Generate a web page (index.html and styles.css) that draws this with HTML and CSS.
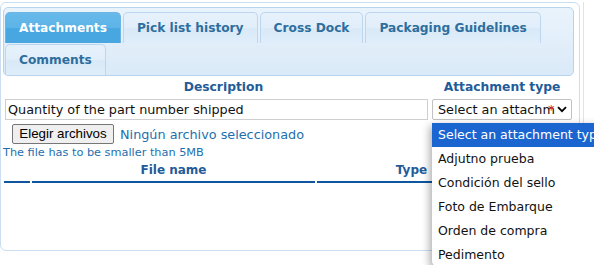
FILE: index.html
```html
<!DOCTYPE html>
<html>
<head>
<meta charset="utf-8">
<link rel="stylesheet" href="styles.css">
</head>
<body>
<div class="page">
  <div class="tabs">
    <ul class="nav">
      <li class="tab active">Attachments</li>
      <li class="tab">Pick list history</li>
      <li class="tab">Cross Dock</li>
      <li class="tab">Packaging Guidelines</li>
      <li class="tab">Comments</li>
    </ul>
    <div class="panel">
      <div class="form-row heads">
        <div class="col-desc">Description</div>
        <div class="col-type">Attachment type</div>
      </div>
      <div class="form-row fields">
        <div class="col-desc"><div class="text-input">Quantity of the part number shipped</div></div>
        <div class="col-type">
          <div class="select">
            <span class="select-text">Select an attachm</span>
            <span class="req">*</span>
            <svg class="chev" width="10" height="7" viewBox="0 0 10 7"><path d="M1 1.2 L5 5.2 L9 1.2" fill="none" stroke="#000" stroke-width="1.8"/></svg>
          </div>
        </div>
      </div>
      <div class="file-row">
        <span class="file-btn">Elegir archivos</span>
        <span class="file-none">Ningún archivo seleccionado</span>
      </div>
      <div class="hint">The file has to be smaller than 5MB</div>
      <div class="grid-head">
        <div class="gh"></div>
        <div class="gh">File name</div>
        <div class="gh">Type</div>
        <div class="gh"></div>
      </div>
    </div>
  </div>
  <ul class="dropdown">
    <li class="opt selected">Select an attachment type</li>
    <li class="opt">Adjutno prueba</li>
    <li class="opt">Condición del sello</li>
    <li class="opt">Foto de Embarque</li>
    <li class="opt">Orden de compra</li>
    <li class="opt">Pedimento</li>
  </ul>
</div>
</body>
</html>
```

FILE: styles.css
```css
html, body {
  margin: 0;
  padding: 0;
  background: #fff;
}
body {
  font-family: "DejaVu Sans", Verdana, sans-serif;
  font-size: 12px;
  overflow: hidden;
}
.page {
  position: relative;
  width: 583px;
  height: 265px;
  border-right: 1px solid #d6e6f6;
}
.tabs {
  margin-top: 2px;
  width: 580px;
  height: 249px;
  box-sizing: border-box;
  border: 1px solid #c9def3;
  border-radius: 6px;
  padding: 4px 5px 0 2px;
}
.nav {
  list-style: none;
  margin: 0;
  padding: 4px 0 0 1px;
  display: flex;
  flex-wrap: wrap;
  align-content: flex-start;
  column-gap: 2px;
  row-gap: 1px;
  border: 1px solid #b7d3ee;
  border-radius: 5px;
  background: linear-gradient(#e9f3fc, #dbeaf8);
  height: 63px;
  box-sizing: content-box;
}
.tab {
  height: 31px;
  box-sizing: border-box;
  border: 1px solid #bcd6ef;
  border-bottom: 0;
  border-radius: 5px 5px 0 0;
  padding: 0 13px;
  line-height: 30px;
  font-weight: bold;
  font-size: 12.2px;
  color: #2e6e9e;
  background: linear-gradient(#e6f1fb 0%, #e1eefa 50%, #d9e9f7 52%, #dfeefa 100%);
}
.tab.active {
  color: #fff;
  border-color: #6cb4e4;
  background: linear-gradient(#67baea 0%, #5db3e7 50%, #46a7e2 52%, #4aa6df 100%);
}
.panel {
  padding: 0;
}
.form-row {
  display: flex;
}
.heads {
  height: 23px;
  line-height: 22px;
  font-weight: bold;
  font-size: 12.3px;
  color: #1f5c99;
}
.heads .col-desc {
  width: 441px;
  text-align: center;
}
.heads .col-type {
  width: 140px;
  text-align: center;
  margin-left: -12px;
}
.fields .col-desc {
  width: 427px;
  padding-left: 2px;
}
.text-input {
  width: 423px;
  height: 21px;
  box-sizing: border-box;
  border: 1px solid #cfcfcf;
  padding: 0 2px;
  line-height: 19px;
  font-size: 12.8px;
  color: #111;
  white-space: nowrap;
  overflow: hidden;
}
.select {
  position: relative;
  width: 140px;
  height: 21px;
  box-sizing: border-box;
  border: 1px solid #c2c2c2;
  border-radius: 2px;
  padding: 0 4px 0 5px;
  line-height: 19px;
  font-size: 12.8px;
  color: #111;
  white-space: nowrap;
  overflow: hidden;
  display: flex;
  align-items: center;
}
.select-text {
  flex: 1;
  overflow: hidden;
}
.req {
  position: absolute;
  left: 115px;
  top: 0;
  color: #e02020;
  font-size: 13px;
}
.chev {
  flex: none;
}
.file-row {
  margin-top: 4px;
  padding-left: 9px;
  height: 20px;
  display: flex;
  align-items: center;
  gap: 6px;
}
.file-btn {
  display: inline-block;
  box-sizing: border-box;
  width: 102px;
  height: 20px;
  border: 1px solid #767676;
  border-radius: 2px;
  background: #efefef;
  font-family: "Liberation Sans", Arial, sans-serif;
  font-size: 13.33px;
  line-height: 18px;
  text-align: center;
  color: #000;
}
.file-none {
  font-size: 12.8px;
  color: #1d6fae;
}
.hint {
  height: 18px;
  line-height: 18px;
  font-size: 11.3px;
  color: #1d6fae;
}
.grid-head {
  display: grid;
  grid-template-columns: 26px 283px 189px 1fr;
  column-gap: 2px;
  padding-left: 1px;
  padding-right: 2px;
}
.gh {
  height: 19px;
  line-height: 17px;
  border-bottom: 2px solid #0e56a0;
  text-align: center;
  font-weight: bold;
  font-size: 12px;
  color: #1f5c99;
}
.dropdown {
  position: absolute;
  left: 432px;
  top: 121px;
  width: 175px;
  margin: 0;
  padding: 0;
  list-style: none;
  background: #fff;
  border-radius: 0 0 0 6px;
  box-shadow: -2px 3px 8px rgba(0,0,0,0.35);
}
.opt {
  height: 24px;
  line-height: 24px;
  padding-left: 6px;
  font-size: 12.5px;
  color: #111;
  white-space: nowrap;
}
.opt.selected {
  background: #1b65d0;
  color: #fff;
}
```
